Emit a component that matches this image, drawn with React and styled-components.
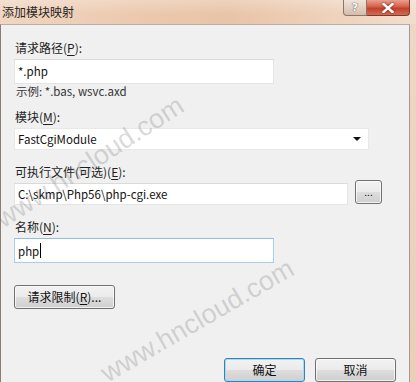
import React from 'react'
import styled, { createGlobalStyle } from 'styled-components'

const GlobalStyle = createGlobalStyle`
  html, body {
    margin: 0;
    padding: 0;
    background: #eed7c3;
  }
  body {
    font-family: "Noto Sans CJK SC", "Noto Sans", sans-serif;
    font-size: 12px;
    color: #1e1e1e;
  }
`

function App() {
  return (
    <>
      <GlobalStyle />
      <Window>
        <TitleBar>
          <Title>添加模块映射</Title>
          <CaptionButtons>
            <HelpButton>?</HelpButton>
            <CloseButton>
              <svg width="12" height="10" viewBox="0 0 12 10">
                <path d="M1.5 1 L10.5 9 M10.5 1 L1.5 9" stroke="#fff" strokeWidth="2.4" strokeLinecap="square" />
              </svg>
            </CloseButton>
          </CaptionButtons>
        </TitleBar>
        <Body>
          <Panel>
            <Label>请求路径(<u>P</u>):</Label>
            <TextBox width={260} height={27}>*.php</TextBox>
            <Hint>示例: *.bas, wsvc.axd</Hint>

            <Label gap={11}>模块(<u>M</u>):</Label>
            <SelectBox>
              <span>FastCgiModule</span>
              <Arrow />
            </SelectBox>

            <Label gap={14}>可执行文件(可选)(<u>E</u>):</Label>
            <FileRow>
              <TextBox width={334} height={22}>C:\skmp\Php56\php-cgi.exe</TextBox>
              <Button width={27} height={24} small>...</Button>
            </FileRow>

            <Label gap={14}>名称(<u>N</u>):</Label>
            <TextBox width={260} height={27} focused>
              php<Caret />
            </TextBox>

            <RestrictRow>
              <Button width={101} height={24}>请求限制(<u>R</u>)...</Button>
            </RestrictRow>

            <Footer>
              <Button width={81} height={24} primary>确定</Button>
              <Button width={81} height={24}>取消</Button>
            </Footer>
          </Panel>
          <RightFrame />
        </Body>
        <Watermark style={{ left: 6, top: 206, transform: 'rotate(-33deg)' }}>www.hncloud.com</Watermark>
        <Watermark style={{ left: 110, top: 360, transform: 'rotate(-30deg)' }}>www.hncloud.com</Watermark>
      </Window>
    </>
  )
}

export default App

const Window = styled.div`
  position: relative;
  width: 416px;
  height: 382px;
  overflow: hidden;
  display: flex;
  flex-direction: column;
  background: #eed7c3;
`

const TitleBar = styled.div`
  height: 24px;
  flex-shrink: 0;
  display: flex;
  align-items: flex-start;
  justify-content: space-between;
  background:
    linear-gradient(180deg, rgba(255,255,255,0.25) 0%, rgba(255,255,255,0) 60%),
    linear-gradient(90deg, #f0d6c2 0%, #ebc8ad 35%, #e9c4a7 55%, #eed2bc 80%, #f2ddcc 100%);
`

const Title = styled.div`
  padding: 4px 0 0 2px;
  font-size: 12px;
  line-height: 16px;
  color: #2a2522;
`

const CaptionButtons = styled.div`
  display: flex;
  margin-right: 6px;
`

const HelpButton = styled.div`
  width: 24px;
  height: 16px;
  display: flex;
  align-items: center;
  justify-content: center;
  box-sizing: border-box;
  border: 1px solid #8d7668;
  border-top: none;
  border-radius: 0 0 0 4px;
  background: linear-gradient(180deg, #efe3da 0%, #e3d0c3 50%, #d4bcad 100%);
  color: #fff;
  font-family: "DejaVu Sans", sans-serif;
  font-weight: bold;
  font-size: 11px;
  text-shadow: 0 0 1px #555, 0 0 1px #555;
`

const CloseButton = styled.div`
  width: 43px;
  height: 16px;
  display: flex;
  align-items: center;
  justify-content: center;
  box-sizing: border-box;
  border: 1px solid #7c3a2c;
  border-left: none;
  border-top: none;
  border-radius: 0 0 4px 0;
  background: linear-gradient(180deg, #e8a08d 0%, #d3604a 45%, #c2402a 55%, #d46a58 100%);

  svg {
    filter: drop-shadow(0 0 1px #6b2010);
  }
`

const Body = styled.div`
  flex: 1;
  display: flex;
  min-height: 0;
`

const Panel = styled.div`
  flex: 1;
  display: flex;
  flex-direction: column;
  align-items: flex-start;
  padding: 15px 13px 0 13px;
  background: #f0f0f0;
  border-top: 1px solid #b9aea6;
  border-left: 1px solid #8c7d73;
  border-right: 1px solid #a59a92;
`

const RightFrame = styled.div`
  width: 6px;
  background: linear-gradient(180deg, #eed7c4 0%, #e9cfba 100%);
`

const Label = styled.div`
  margin-top: ${({ gap }) => gap || 0}px;
  line-height: 16px;
  padding-left: 1px;
  padding-right: 2px;
  white-space: nowrap;

  u {
    text-underline-offset: 2px;
  }
`

const TextBox = styled.div`
  box-sizing: border-box;
  width: ${({ width }) => width}px;
  height: ${({ height }) => height}px;
  margin-top: 3px;
  display: flex;
  align-items: center;
  padding-left: 3px;
  background: #fff;
  border: 1px solid ${({ focused }) => (focused ? '#a9cdee' : '#e4e4e4')};
  border-top-color: ${({ focused }) => (focused ? '#8fbbe6' : '#dadada')};
  white-space: nowrap;
  font-size: 11.5px;
  color: #111;
`

const Caret = styled.span`
  display: inline-block;
  width: 1px;
  height: 15px;
  margin-left: 1px;
  background: #000;
`

const Hint = styled.div`
  line-height: 14px;
  padding-left: 2px;
  font-size: 11.5px;
  color: #333;
`

const SelectBox = styled(TextBox)`
  width: 355px;
  height: 24px;
  justify-content: space-between;
  padding-right: 7px;
  border-color: #e8e8e8;
`

const Arrow = styled.span`
  width: 0;
  height: 0;
  border-left: 4px solid transparent;
  border-right: 4px solid transparent;
  border-top: 4px solid #111;
`

const FileRow = styled.div`
  display: flex;
  align-items: flex-start;
  gap: 7px;

  & > div:first-child {
    margin-top: 3px;
  }
`

const Button = styled.div`
  box-sizing: border-box;
  width: ${({ width }) => width}px;
  height: ${({ height }) => height}px;
  display: flex;
  align-items: center;
  justify-content: center;
  border: 1px solid ${({ primary }) => (primary ? '#3c7fb1' : '#707070')};
  border-radius: 3px;
  background: linear-gradient(180deg, #f2f2f2 0%, #ebebeb 48%, #dddddd 52%, #cfcfcf 100%);
  box-shadow: inset 0 0 0 1px ${({ primary }) => (primary ? '#9fdcfb' : 'rgba(255,255,255,0.7)')};
  color: #111;
  font-size: ${({ small }) => (small ? 10 : 12)}px;
  line-height: 1;
  white-space: nowrap;

  u {
    text-underline-offset: 2px;
  }
`

const RestrictRow = styled.div`
  margin-top: 22px;
`

const Footer = styled.div`
  align-self: stretch;
  display: flex;
  justify-content: flex-end;
  gap: 10px;
  margin-top: 49px;
`

const Watermark = styled.div`
  position: absolute;
  transform-origin: 0 100%;
  font-family: "Liberation Sans", sans-serif;
  font-size: 27px;
  line-height: 27px;
  color: rgba(110, 110, 110, 0.26);
  white-space: nowrap;
  pointer-events: none;
`
